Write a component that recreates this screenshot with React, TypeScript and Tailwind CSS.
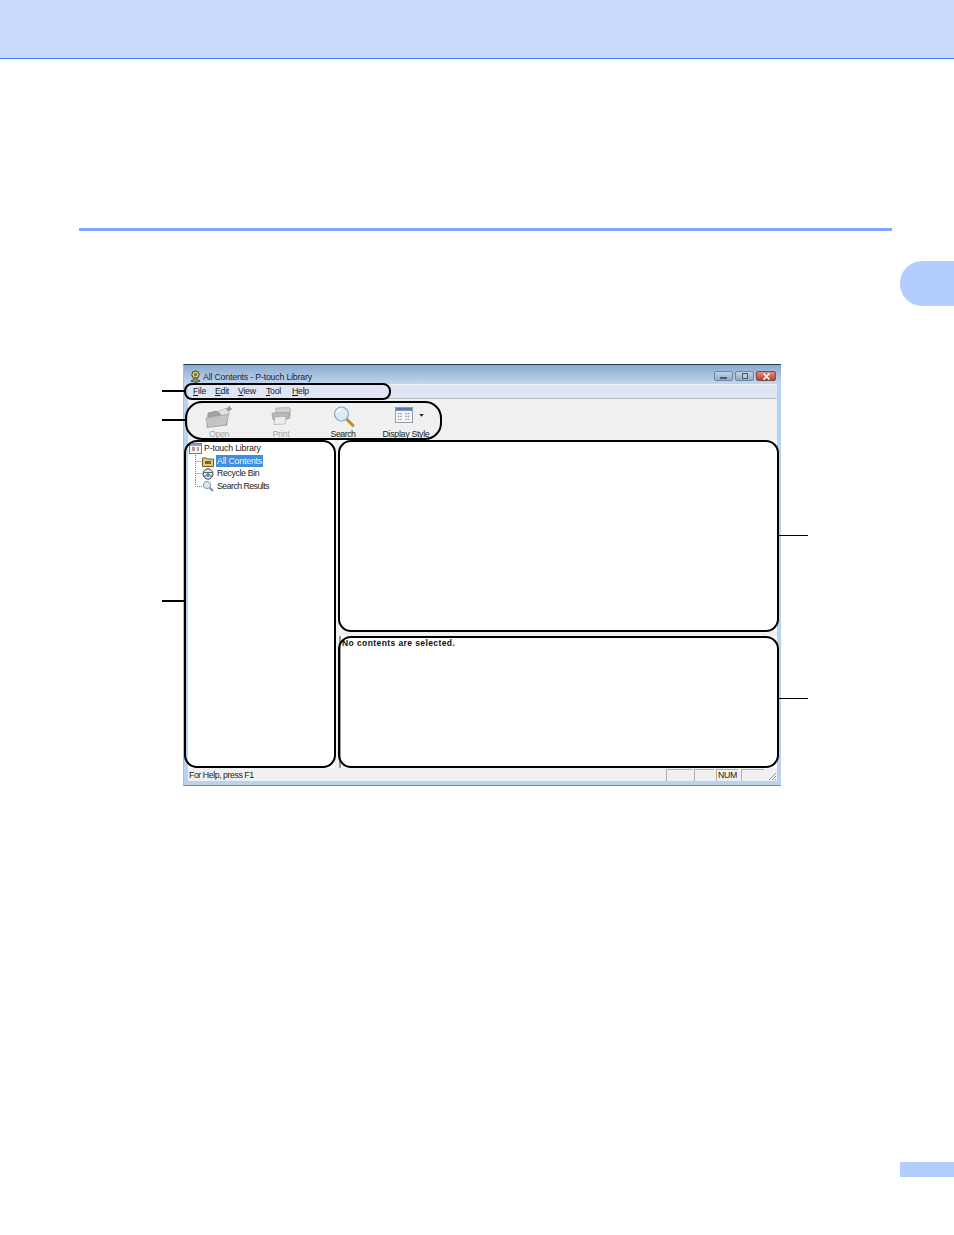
import React from "react";

const ui = { fontFamily: '"Liberation Sans", Arial, sans-serif' };

function OpenIcon() {
  return (
    <svg width="28" height="23" viewBox="0 0 28 23">
      <path d="M3 8 L11 6 L14 7.5 L22 5.5 L22 20 L2 22 Z" fill="#a2a2a2" stroke="#868686" strokeWidth="0.6" />
      <path d="M1 13 L18 10 L24 9 L21 20 L2.5 22.5 Z" fill="#c4c4c4" stroke="#989898" strokeWidth="0.6" />
      <path d="M13 6.5 L21 3 L24.5 8.5 L17 10.5 Z" fill="#e2e2e2" stroke="#a5a5a5" strokeWidth="0.6" />
      <path d="M21 4 L25 0.5 L25.5 3 L27.5 3.5 L24 6.5 Z" fill="#9a9a9a" />
    </svg>
  );
}

function PrintIcon() {
  return (
    <svg width="20" height="18" viewBox="0 0 20 18">
      <path d="M5 1 L18 0.5 L19.5 2 L19 9 L4 10 Z" fill="#d0d0d0" stroke="#9c9c9c" strokeWidth="0.6" />
      <path d="M1 6 L18 5.5 L19 11 L17 12 L2 13 Z" fill="#b8b8b8" stroke="#909090" strokeWidth="0.6" />
      <path d="M4 10 L15 9.5 L14 17 L3 17.5 Z" fill="#eeeeee" stroke="#a5a5a5" strokeWidth="0.6" />
    </svg>
  );
}

function SearchIcon() {
  return (
    <svg width="22" height="21" viewBox="0 0 22 21" className="ml-[2px]">
      <line x1="13.5" y1="13" x2="20" y2="19.5" stroke="#c58a2a" strokeWidth="3" strokeLinecap="round" />
      <circle cx="8.5" cy="8" r="7" fill="#dceaf6" stroke="#8aa7bf" strokeWidth="1.2" />
      <path d="M4 7 A5 5 0 0 1 8.5 3.2" fill="none" stroke="#ffffff" strokeWidth="1.4" />
    </svg>
  );
}

function DisplayIcon() {
  return (
    <svg width="18" height="16" viewBox="0 0 19 17" className="-mt-[2px] -ml-[5px]">
      <rect x="0.5" y="0.5" width="18" height="16" fill="#f4f6fa" stroke="#8d97a8" />
      <rect x="1" y="1" width="17" height="3" fill="#5a78ac" />
      <path d="M3 7h5M11 7h5M3 10h5M11 10h5M3 13h5M11 13h5" stroke="#8a8f98" strokeWidth="1.2" strokeDasharray="1.5 1" />
    </svg>
  );
}

function LibraryIcon() {
  return (
    <svg width="13" height="11" viewBox="0 0 13 11">
      <rect x="0.5" y="0.5" width="12" height="10" fill="#f2f4f8" stroke="#6f7a8c" />
      <rect x="1" y="1" width="11" height="2" fill="#8fa4c6" />
      <path d="M3 5h3M3 7h3M8 5h2M8 7h2" stroke="#7a3d3d" strokeWidth="1" />
    </svg>
  );
}

function FolderIcon() {
  return (
    <svg width="12" height="11" viewBox="0 0 12 11">
      <path d="M0.5 2 H4.5 L5.5 3 H11.5 V10.5 H0.5 Z" fill="#e8c877" stroke="#6b5a2c" />
      <rect x="3" y="5" width="6" height="3" fill="#6a6552" />
    </svg>
  );
}

function BinIcon() {
  return (
    <svg width="12" height="12" viewBox="0 0 12 12">
      <ellipse cx="6" cy="6" rx="5" ry="5.2" fill="#dfe6ea" stroke="#3f4a50" />
      <path d="M1.5 4.5 H10.5 M2 8 H10" stroke="#4a555c" strokeWidth="0.9" />
      <path d="M4 6.5 L6 5 L8 6.5 L6 8.5 Z" fill="#4a7f9e" />
    </svg>
  );
}

function TreeSearchIcon() {
  return (
    <svg width="12" height="12" viewBox="0 0 12 12">
      <line x1="7" y1="7" x2="11" y2="11" stroke="#8a8f96" strokeWidth="2" />
      <circle cx="5" cy="5" r="3.6" fill="#d8e8f6" stroke="#7f9db8" />
    </svg>
  );
}

function Connector({ last }: { last?: boolean }) {
  return (
    <svg width="7" height="13" viewBox="0 0 7 13" className="shrink-0">
      <path d={last ? "M0.5 0 V6.5 H7" : "M0.5 0 V13 M0.5 6.5 H7"} fill="none" stroke="#808080" strokeWidth="1" strokeDasharray="1 1" />
    </svg>
  );
}

function ToolItem({ icon, label, muted, track }: { icon: React.ReactNode; label: string; muted?: boolean; track: string }) {
  return (
    <div className="flex w-[62px] flex-col items-center">
      <div className="flex h-[24px] items-center justify-center">{icon}</div>
      <span className={`mt-[1px] text-[8.8px] leading-[11px] whitespace-nowrap ${track} ${muted ? "text-[#a4a4a0]" : "text-[#1c1c1c]"}`}>{label}</span>
    </div>
  );
}

function Win({ kind }: { kind: "min" | "max" | "close" }) {
  if (kind === "close") {
    return (
      <div className="flex h-[10px] w-[20px] items-center justify-center rounded-[2px] border border-[#7d4b45] bg-gradient-to-b from-[#e28d7d] to-[#b8412f]">
        <svg width="9" height="7" viewBox="0 0 9 7">
          <path d="M1.5 0.5 L7.5 6.5 M7.5 0.5 L1.5 6.5" stroke="#ffffff" strokeWidth="1.6" />
        </svg>
      </div>
    );
  }
  return (
    <div className="flex h-[10px] w-[19px] items-center justify-center rounded-[2px] border border-[#6f88a3] bg-gradient-to-b from-[#c3d4e6] to-[#92abc6]">
      {kind === "min" ? (
        <div className="mt-[3px] h-[2px] w-[7px] border border-[#4d5a68] bg-white" />
      ) : (
        <div className="h-[6px] w-[6px] border border-[#4d5a68] bg-[#b9cadb]" />
      )}
    </div>
  );
}

function Cap({ c }: { c: string }) {
  return <span className="underline">{c}</span>;
}

function StatusPane({ w, children }: { w: string; children?: React.ReactNode }) {
  return <div className={`${w} flex h-[12px] items-center justify-center border-t border-l border-[#b0b0b0] text-[8.8px] tracking-[-0.3px] text-[#1c1c1c]`}>{children}</div>;
}

export default function App() {
  return (
    <div className="flex h-[1235px] w-full flex-col bg-white" style={ui}>
      <div className="h-[59px] shrink-0 border-b border-[#3f7df0] bg-[#c9dbfe]" />
      <div className="mt-[169px] mr-[62px] ml-[79px] h-[3px] shrink-0 bg-[#7fa6ff]" />
      <div className="mt-[30px] h-[45px] w-[54px] shrink-0 self-end rounded-l-[22px] bg-[#b4cdff]" />

      <div className="relative mt-[58px] ml-[183px] flex h-[422px] w-[598px] shrink-0 flex-col border-t border-b border-l border-t-[#23404a] border-b-[#4f9bb0] border-l-[#a9bfd6] bg-[#b9d3ef] blur-[0.3px]">
        <div className="flex h-[19px] shrink-0 items-center bg-gradient-to-b from-[#8aaad0] to-[#c2d7ec] pt-[5px] pr-[5px] pl-[5px]">
          <svg width="13" height="13" viewBox="0 0 14 14" className="mb-[1px] shrink-0">
            <circle cx="7" cy="5" r="4" fill="#e5c84a" stroke="#3b3a20" />
            <path d="M2 12 L7 8 L12 12 L7 13.5 Z" fill="#7d8f6a" stroke="#3a3f30" strokeWidth="0.8" />
            <circle cx="7" cy="5" r="1.4" fill="#3a5a9a" />
          </svg>
          <span className="ml-[1px] text-[8.8px] leading-none tracking-[-0.2px] whitespace-nowrap text-[#1a2530]">All Contents - P-touch Library</span>
          <div className="mb-[2px] ml-auto flex gap-[2px]">
            <Win kind="min" />
            <Win kind="max" />
            <Win kind="close" />
          </div>
        </div>

        <div className="mr-[4px] ml-[4px] flex h-[15px] shrink-0 items-center gap-[10px] border-t border-b border-t-[#eef2fa] border-b-[#bcbcbc] bg-[#dfe5f3] pl-[5px] text-[8.8px] leading-none tracking-[-0.3px] text-[#1c1c1c]">
          <span className="w-[12px]"><Cap c="F" />ile</span>
          <span className="w-[13px]"><Cap c="E" />dit</span>
          <span className="w-[18px]"><Cap c="V" />iew</span>
          <span className="w-[16px]"><Cap c="T" />ool</span>
          <span><Cap c="H" />elp</span>
        </div>

        <div className="mr-[4px] ml-[4px] flex h-[41px] shrink-0 items-start bg-[#f0f0f0] pt-[5px]">
          <ToolItem icon={<OpenIcon />} label="Open" muted track="tracking-[-0.4px]" />
          <ToolItem icon={<PrintIcon />} label="Print" muted track="tracking-[-0.2px]" />
          <ToolItem icon={<SearchIcon />} label="Search" track="tracking-[-0.5px]" />
          <div className="ml-[1px]">
            <ToolItem icon={<DisplayIcon />} label="Display Style" track="tracking-[-0.3px]" />
          </div>
          <svg width="5" height="3" viewBox="0 0 6 4" className="mt-[10px] -ml-[18px]">
            <path d="M0 0 H6 L3 3.5 Z" fill="#222" />
          </svg>
        </div>

        <div className="mr-[4px] ml-[4px] flex h-[328px] shrink-0 bg-[#f0f0f0]">
          <div className="h-full w-[147px] bg-white pt-[2px] pl-[1px] text-[8.8px] text-[#1c1c1c]">
            <div className="flex h-[13px] items-center gap-[2px]">
              <LibraryIcon />
              <span className="leading-none tracking-[-0.2px]">P-touch Library</span>
            </div>
            <div className="ml-[6px]">
              <div className="flex h-[12.5px] items-center">
                <Connector />
                <FolderIcon />
                <span className="ml-[2px] bg-[#3f8fdc] px-[1px] leading-[12px] tracking-[-0.2px] text-[#e8f2fb]">All Contents</span>
              </div>
              <div className="flex h-[12.5px] items-center">
                <Connector />
                <BinIcon />
                <span className="ml-[2px] px-[1px] leading-none tracking-[-0.38px]">Recycle Bin</span>
              </div>
              <div className="flex h-[12.5px] items-center">
                <Connector last />
                <TreeSearchIcon />
                <span className="ml-[2px] px-[1px] leading-none tracking-[-0.55px]">Search Results</span>
              </div>
            </div>
          </div>
          <div className="ml-[4px] flex h-full flex-1 flex-col">
            <div className="h-[191px] bg-white" />
            <div className="h-[5px] bg-[#f0f0f0]" />
            <div className="flex-1 border-l-2 border-[#9a9a9a] bg-white pl-[1px]">
              <span className="block pt-[2px] text-[8.5px] leading-[11px] font-bold tracking-[0.41px] text-[#111]">No contents are selected.</span>
            </div>
          </div>
        </div>

        <div className="mr-[4px] ml-[4px] flex h-[13px] shrink-0 items-end bg-[#f0f0f0] pl-[1px]">
          <span className="mt-[2px] self-center text-[8.8px] leading-none tracking-[-0.45px] text-[#1c1c1c]">For Help, press F1</span>
          <div className="ml-auto flex items-end">
            <StatusPane w="w-[26px] mr-[2px]" />
            <StatusPane w="w-[20px] mr-[2px]">{null}</StatusPane>
            <StatusPane w="w-[22px] mr-[3px]">NUM</StatusPane>
            <StatusPane w="w-[23px]" />
            <svg width="13" height="12" viewBox="0 0 13 12">
              <path d="M12 4 L5 11 M12 7 L8 11 M12 10 L11 11" stroke="#9a9a9a" strokeWidth="1" />
            </svg>
          </div>
        </div>

        {/* call-out ovals and leader lines drawn over the window */}
        <div className="absolute top-[18px] left-[0px] h-[17px] w-[207px] rounded-[8px] border-2 border-black" />
        <div className="absolute top-[36px] left-[1px] h-[39px] w-[257px] rounded-[17px] border-2 border-black" />
        <div className="absolute top-[75px] left-[0px] h-[328px] w-[152px] rounded-[13px] border-2 border-black" />
        <div className="absolute top-[75px] left-[154px] h-[192px] w-[441px] rounded-[13px] border-2 border-black" />
        <div className="absolute top-[271px] left-[154px] h-[132px] w-[441px] rounded-[13px] border-2 border-black" />
        <div className="absolute top-[25px] left-[-22px] h-[2px] w-[22px] bg-black" />
        <div className="absolute top-[54px] left-[-22px] h-[2px] w-[23px] bg-black" />
        <div className="absolute top-[235px] left-[-22px] h-[2px] w-[22px] bg-black" />
        <div className="absolute top-[170px] left-[595px] h-px w-[29px] bg-black" />
        <div className="absolute top-[333px] left-[595px] h-px w-[29px] bg-black" />
      </div>

      <div className="mt-[376px] h-[15px] w-[54px] shrink-0 self-end bg-[#b4cdff]" />
    </div>
  );
}
